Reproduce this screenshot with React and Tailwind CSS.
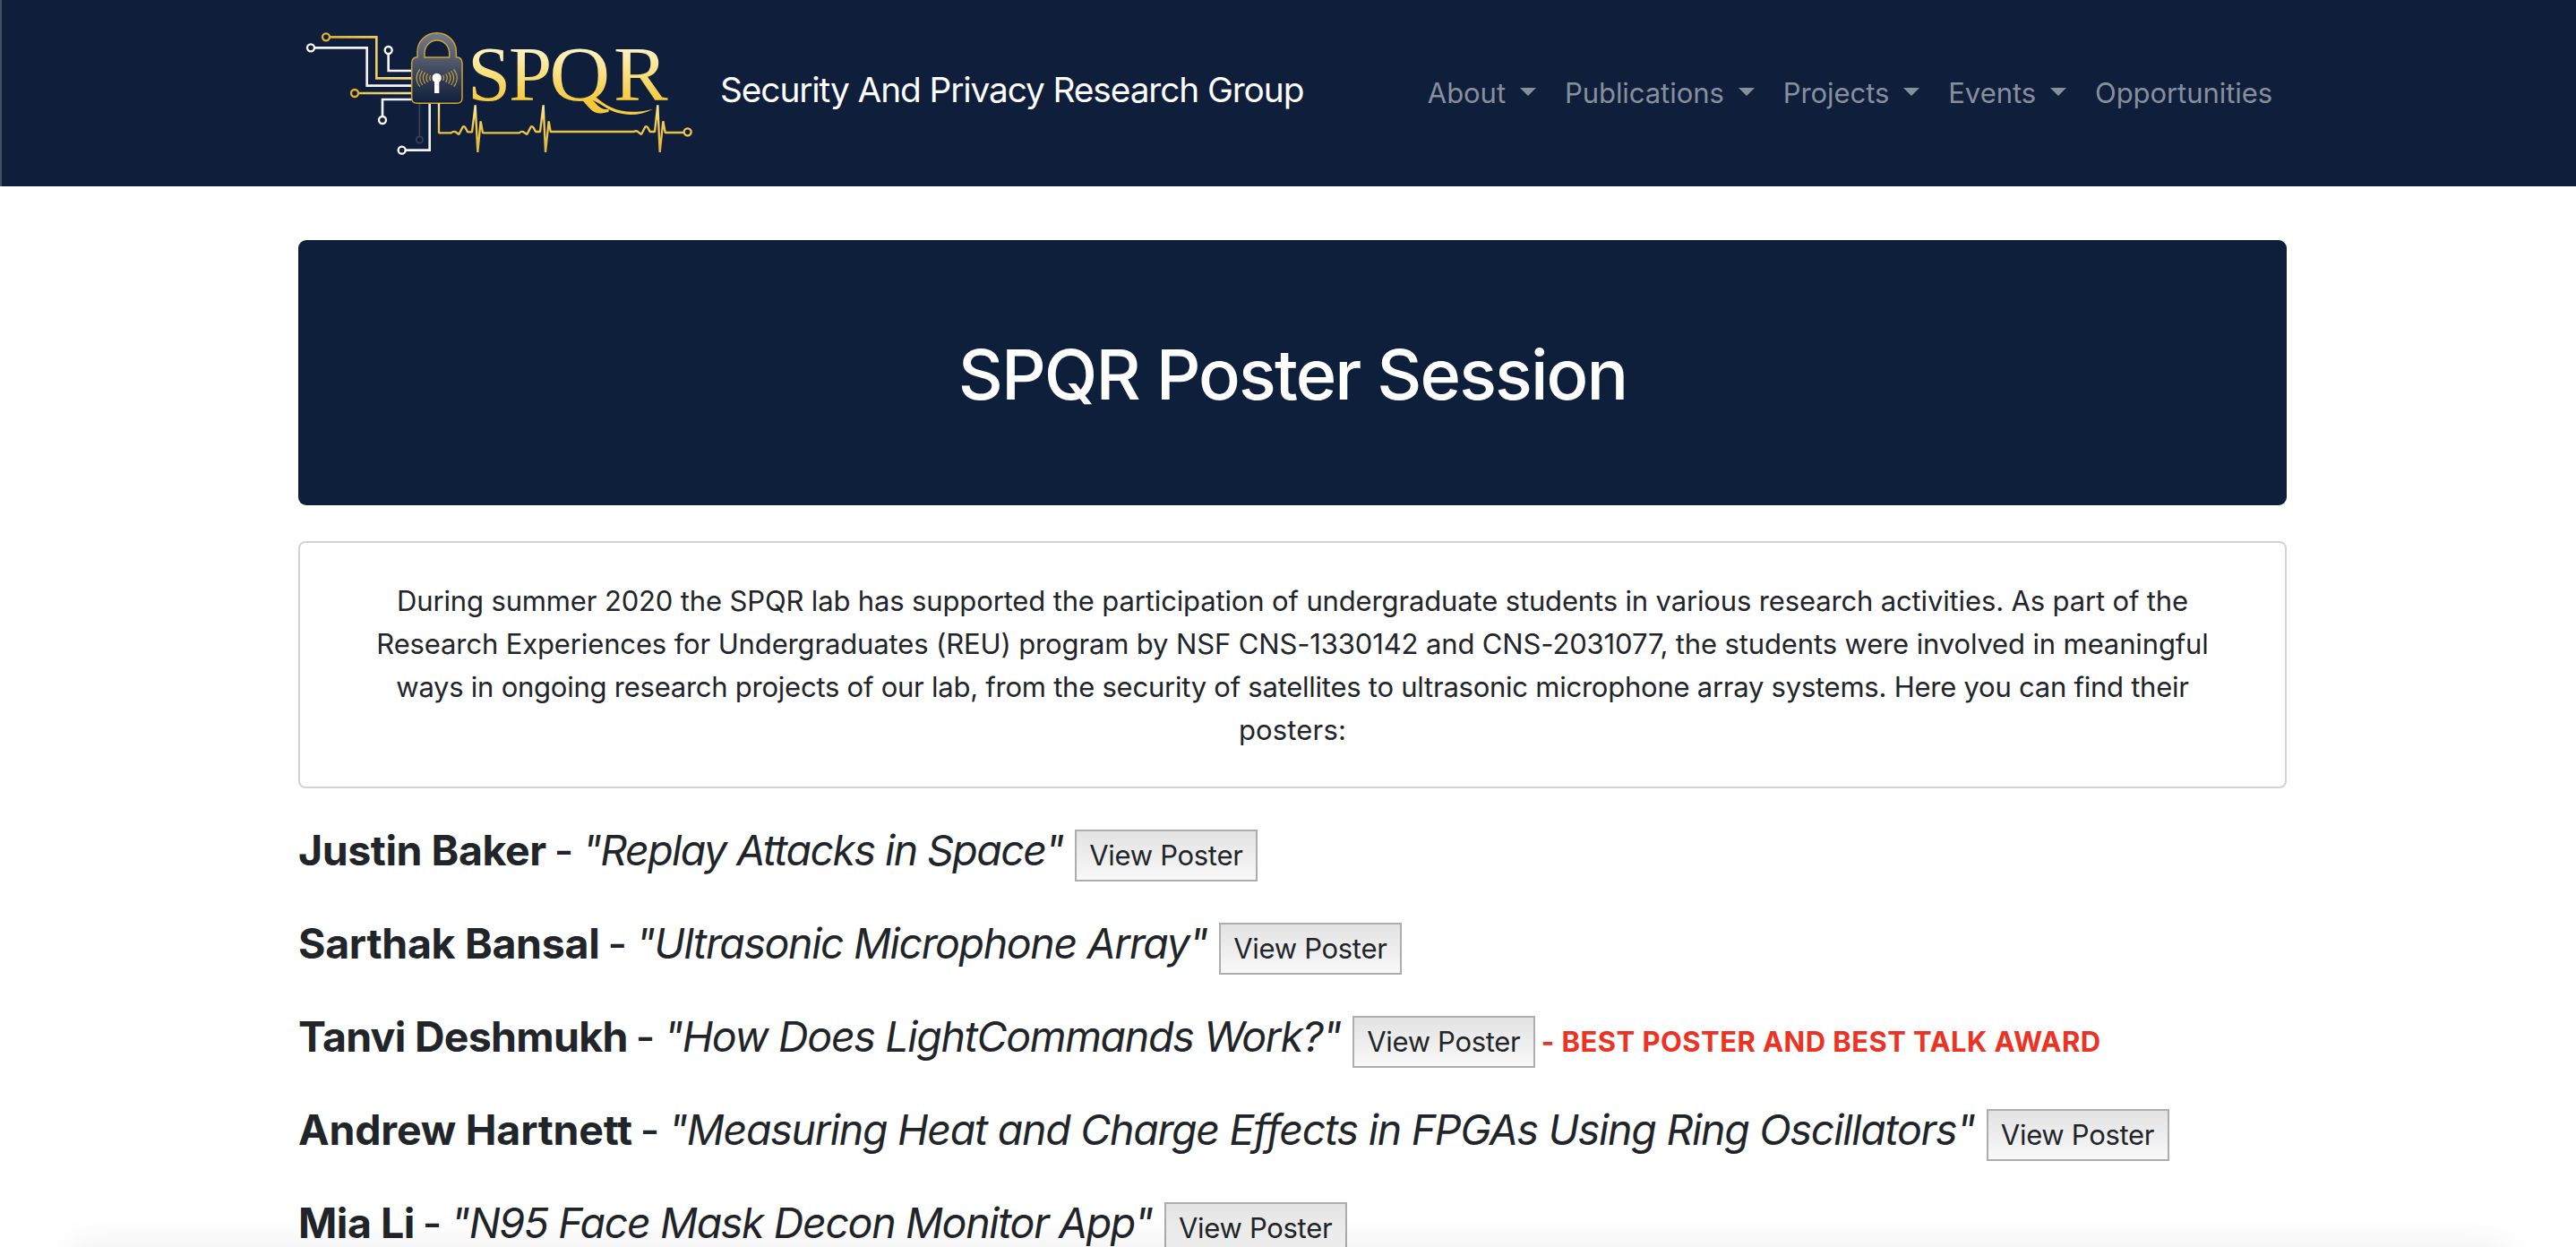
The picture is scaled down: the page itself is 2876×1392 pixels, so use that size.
import React from "react";

const navItems = [
  { label: "About", menu: true },
  { label: "Publications", menu: true },
  { label: "Projects", menu: true },
  { label: "Events", menu: true },
  { label: "Opportunities", menu: false },
];

const posters = [
  { name: "Justin Baker", nameTrack: "tracking-[-0.45px]", title: '"Replay Attacks in Space"', titleTrack: "tracking-[-1.57px]" },
  { name: "Sarthak Bansal", nameTrack: "tracking-[-0.3px]", title: '"Ultrasonic Microphone Array"', titleTrack: "tracking-[-1.39px]" },
  {
    name: "Tanvi Deshmukh",
    nameTrack: "tracking-[-0.72px]",
    title: '"How Does LightCommands Work?"',
    titleTrack: "tracking-[-1.32px]",
    award: "- BEST POSTER AND BEST TALK AWARD",
  },
  {
    name: "Andrew Hartnett",
    nameTrack: "tracking-[-0.22px]",
    title: '"Measuring Heat and Charge Effects in FPGAs Using Ring Oscillators"',
    titleTrack: "tracking-[-1.27px]",
  },
  { name: "Mia Li", nameTrack: "tracking-[-0.5px]", title: '"N95 Face Mask Decon Monitor App"', titleTrack: "tracking-[-1.37px]" },
];

function Logo() {
  const ring = { r: 12, fill: "none", strokeWidth: 7 };
  const arcs = [0, 1, 2, 3, 4];
  return (
    <svg className="mt-[10px] h-[180px] w-[460px] shrink-0 self-start" viewBox="39 0 1380 540" aria-label="SPQR">
      <defs>
        <linearGradient id="letters" gradientUnits="userSpaceOnUse" x1="0" y1="135" x2="0" y2="310">
          <stop offset="0" stopColor="#fdf3c4" />
          <stop offset="0.5" stopColor="#f9de7c" />
          <stop offset="1" stopColor="#f5c83c" />
        </linearGradient>
        <linearGradient id="pulse" gradientUnits="userSpaceOnUse" x1="0" y1="316" x2="0" y2="484">
          <stop offset="0" stopColor="#fbeaa6" />
          <stop offset="0.5" stopColor="#efc645" />
          <stop offset="1" stopColor="#dcb43c" />
        </linearGradient>
        <linearGradient id="goldWire" gradientUnits="userSpaceOnUse" x1="130" y1="0" x2="420" y2="0">
          <stop offset="0" stopColor="#dfae2c" />
          <stop offset="1" stopColor="#f7e08c" />
        </linearGradient>
        <linearGradient id="lockBody" gradientUnits="userSpaceOnUse" x1="0" y1="80" x2="0" y2="316">
          <stop offset="0" stopColor="#747b8a" />
          <stop offset="0.45" stopColor="#4b5369" />
          <stop offset="0.75" stopColor="#28344f" />
          <stop offset="1" stopColor="#101f3d" />
        </linearGradient>
      </defs>

      <g fill="none" stroke="#f2f2f7" strokeWidth="8">
        <path d="M95 130H269V257H420" />
        <path d="M341 152V207H420" />
        <path d="M420 303H321V358" />
        <path d="M479 316V473H399" />
      </g>
      <g stroke="#ffffff">
        <circle cx="81" cy="130" {...ring} />
        <circle cx="341" cy="138" {...ring} />
        <circle cx="321" cy="372" {...ring} />
        <circle cx="386" cy="473" {...ring} />
      </g>
      <g fill="none" stroke="#36425a" strokeWidth="5">
        <path d="M445 316V424" />
        <circle cx="445" cy="438" r="11" />
      </g>
      <path d="M146 94H301V232H420M242 282H420" fill="none" stroke="url(#goldWire)" strokeWidth="8" />
      <circle cx="132" cy="94" stroke="#e2b333" {...ring} />
      <circle cx="228" cy="282" stroke="#e2b333" {...ring} />

      <path
        d="M438 161V143A65 63 0 0 1 568 143V161Q588 162 588 182V298Q588 316 570 316H437Q419 316 419 298V182Q419 162 438 161ZM462 162H545V148A41.500 43 0 0 0 462 148Z"
        fill="url(#lockBody)"
        fillRule="evenodd"
        stroke="#cfa52d"
        strokeWidth="4.500"
      />
      <g fill="none" stroke="#c4a13a" strokeWidth="3.500">
        {arcs.map((i) => (
          <path key={i} d={`M${446 + i * 9} ${202 + i * 5}Q${424 + i * 13} 231 ${446 + i * 9} ${260 - i * 5}`} />
        ))}
        {arcs.map((i) => (
          <path key={i} d={`M${560 - i * 9} ${202 + i * 5}Q${582 - i * 13} 231 ${560 - i * 9} ${260 - i * 5}`} />
        ))}
      </g>
      <circle cx="503" cy="231" r="15.500" fill="#fff" />
      <path d="M495 240H511V282H495Z" fill="#fff" />

      <path
        d="M510 316V415H551Q560 407 569 414L577 420L590 395Q595 391 599 398L606 412H621L632 322L640 480L650 376L657 415H779Q788 407 796 414L805 420L818 395Q823 391 827 398L834 411H849L860 322L867 480L878 376L884 411H1163Q1172 405 1180 414L1188 420L1201 395Q1206 391 1210 398L1217 411H1233L1243 322L1250 480L1261 376L1268 414H1329"
        fill="none"
        stroke="url(#pulse)"
        strokeWidth="7"
        strokeLinejoin="bevel"
      />
      <circle cx="1343" cy="412" stroke="#f0c94c" {...ring} />

      <g fontFamily="Liberation Serif, serif" fontSize="260" fill="url(#letters)">
        <text x="606 744" y="307">
          SP
        </text>
        <text x="880" y="307" textLength="204" lengthAdjust="spacingAndGlyphs">
          Q
        </text>
        <text x="1095" y="307" textLength="182" lengthAdjust="spacingAndGlyphs">
          R
        </text>
      </g>
      <path d="M1005 297L1030 290C1078 333 1130 360 1227 335C1175 364 1110 358 1065 328Q1030 306 1005 297Z" fill="#f5cb45" />
    </svg>
  );
}

function Caret() {
  return (
    <svg className="mb-1 ml-4 h-[9px] w-[18px]" viewBox="0 0 18 9" fill="currentColor">
      <path d="M0 0H18L9 9Z" />
    </svg>
  );
}

function PosterRow({ name, nameTrack, title, titleTrack, award }) {
  return (
    <li className="mb-[46px] flex h-[58px] items-baseline whitespace-nowrap">
      <span className={`text-[46.5px] leading-[58px] font-bold ${nameTrack}`}>{name}</span>
      <span className="ml-[9px] text-[46.5px] leading-[58px] font-medium">-</span>
      <em className={`ml-[10px] text-[46.5px] leading-[58px] ${titleTrack}`}>{title}</em>
      <button className="ml-[13px] h-[58px] w-[204px] shrink-0 border-2 border-[#adadad] bg-linear-to-b from-[#e3e3e3] to-[#f8f8f8] pt-[3px] pb-[3px] text-[31px] leading-[48px] tracking-[-0.3px]">
        View Poster
      </button>
      {award && <span className="ml-[7px] text-[31px] leading-[48px] font-bold tracking-[0.44px] text-[#ec3323]">{award}</span>}
    </li>
  );
}

export default function App() {
  return (
    <div className="relative h-[1392px] w-[2876px] overflow-hidden bg-white font-[Inter,sans-serif] text-[#212529]">
      <header className="h-[208px] border-l-2 border-[#414e66] bg-[#0f1e3b]">
        <div className="ml-[331px] flex h-full w-[2220px] items-center">
          <Logo />
          <span className="mb-[9px] ml-[11px] text-[38.8px] leading-[60px] font-[440] tracking-[-1.1px] whitespace-nowrap text-white">
            Security And Privacy Research Group
          </span>
          <nav className="mr-4 ml-auto flex gap-8 text-[31px] leading-[48px] font-[430] tracking-[-0.06px] text-[#878f9d]">
            {navItems.map((item) => (
              <a key={item.label} className="flex items-center">
                {item.label}
                {item.menu && <Caret />}
              </a>
            ))}
          </nav>
        </div>
      </header>

      <main className="ml-[333px] w-[2220px]">
        <section className="mt-[60px] flex h-[296px] items-center justify-center rounded-[9px] bg-[#0e1f3c] pt-1">
          <h1 className="text-[77.6px] leading-[96px] font-medium tracking-[-1.9px] text-white">SPQR Poster Session</h1>
        </section>

        <section className="mt-10 h-[276px] rounded-[8px] border-2 border-[#d3d3d3] pt-[41px] text-center text-[31px] leading-[48px] whitespace-nowrap">
          <p>
            <span className="block tracking-[-0.144px]">
              During summer 2020 the SPQR lab has supported the participation of undergraduate students in various research activities. As part of the
            </span>
            <span className="block tracking-[-0.134px]">
              Research Experiences for Undergraduates (REU) program by NSF CNS-1330142 and CNS-2031077, the students were involved in meaningful
            </span>
            <span className="block tracking-[-0.244px]">
              ways in ongoing research projects of our lab, from the security of satellites to ultrasonic microphone array systems. Here you can find their
            </span>
            <span className="block tracking-[0.16px]">posters:</span>
          </p>
        </section>

        <ul className="mt-10">
          {posters.map((poster) => (
            <PosterRow key={poster.name} {...poster} />
          ))}
        </ul>
      </main>

      <div className="pointer-events-none absolute inset-x-20 -bottom-10 h-10 shadow-[0_0_44px_rgba(0,0,0,0.08)]" />
    </div>
  );
}
